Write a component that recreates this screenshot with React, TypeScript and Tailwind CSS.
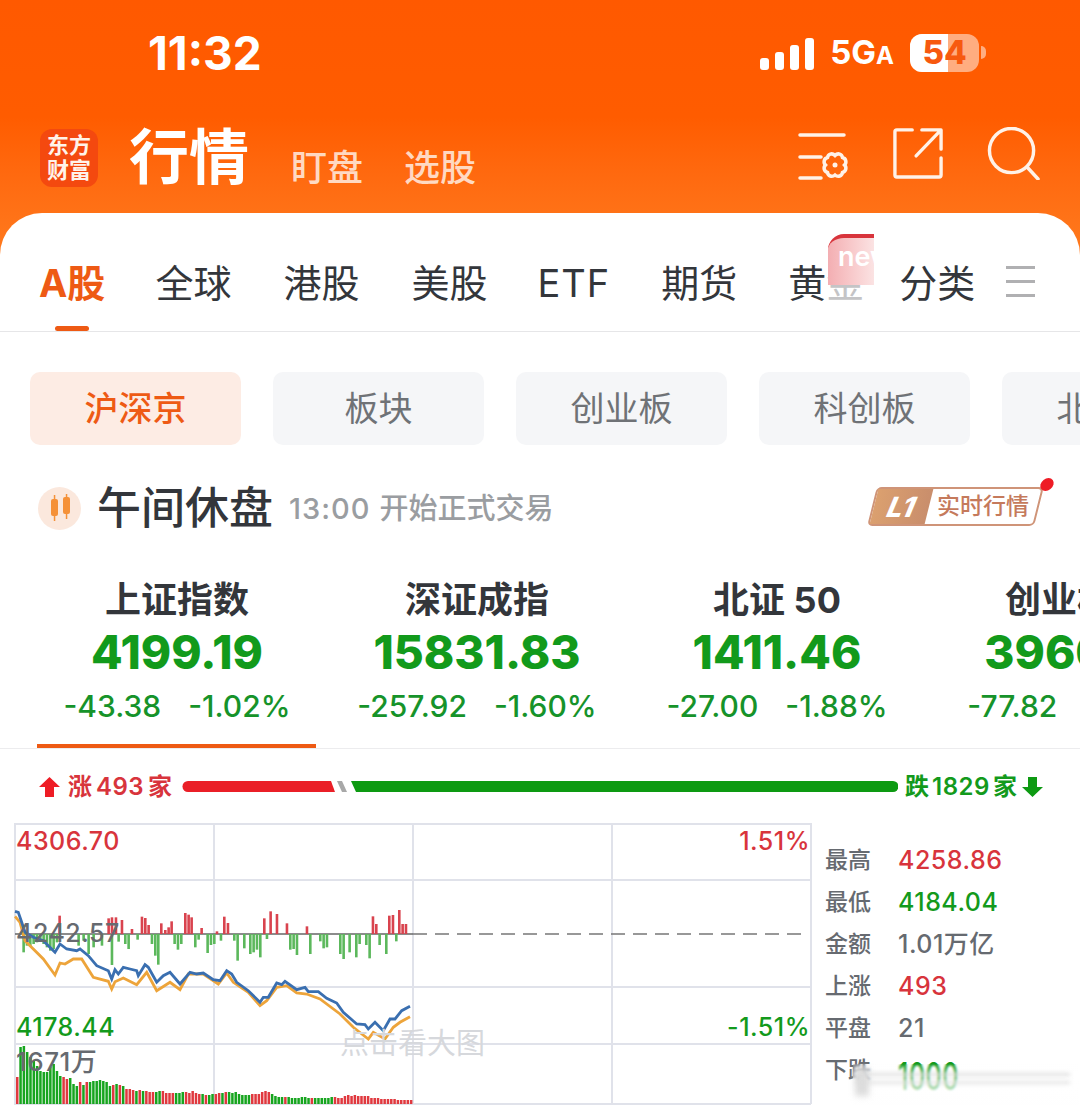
import React from "react";

const FONT = "font-['Inter','Noto_Sans_CJK_SC',sans-serif]";

const tabs = ["全球", "港股", "美股", "ETF", "期货"];
const pills = ["板块", "创业板", "科创板"];

const indices = [
  { name: "上证指数", price: "4199.19", diff: "-43.38", pct: "-1.02%" },
  { name: "深证成指", price: "15831.83", diff: "-257.92", pct: "-1.60%" },
  { name: "北证 50", price: "1411.46", diff: "-27.00", pct: "-1.88%" },
  { name: "创业板指", price: "3960.14", diff: "-77.82", pct: "-1.92%" },
];

const stats = [
  { label: "最高", value: "4258.86", color: "text-[#d8343c]" },
  { label: "最低", value: "4184.04", color: "text-[#139a1c]" },
  { label: "金额", value: "1.01万亿", color: "text-[#666a70]" },
  { label: "上涨", value: "493", color: "text-[#d8343c]" },
  { label: "平盘", value: "21", color: "text-[#666a70]" },
  { label: "下跌", value: "1000", color: "text-[#139a1c]" },
];

// coords below were read off a 3x crop, toPts brings them back to page px
const toPts = (p: number[][]) => p.map(([x, y]) => `${(x / 3).toFixed(1)},${(y / 3 + 820).toFixed(1)}`).join(" ");

const blueLine = [[45,277],[55,280],[65,310],[75,340],[100,355],[130,365],[165,400],[180,375],[200,390],[230,395],[240,390],[265,410],[290,440],[325,455],[335,480],[345,452],[355,465],[370,445],[390,450],[410,455],[415,470],[435,437],[445,445],[470,490],[490,470],[510,460],[540,495],[570,460],[590,465],[610,462],[640,482],[660,485],[680,455],[695,465],[710,490],[745,515],[780,550],[790,535],[805,535],[830,492],[845,497],[855,487],[890,512],[915,505],[925,518],[955,518],[980,538],[1010,552],[1030,580],[1070,615],[1095,617],[1105,630],[1125,610],[1150,635],[1170,600],[1185,600],[1205,575],[1230,562]];
const orangeLine = [[45,292],[60,310],[75,365],[100,390],[130,420],[165,468],[180,432],[195,435],[220,420],[245,420],[280,475],[325,487],[335,510],[345,488],[370,477],[410,497],[440,460],[470,515],[510,490],[540,512],[565,465],[610,465],[655,495],[680,462],[700,490],[745,520],[780,560],[800,545],[830,505],[860,500],[890,522],[920,525],[960,540],[1020,585],[1060,625],[1105,660],[1120,640],[1155,660],[1180,625],[1200,610],[1230,593]];
const redBars = [[178,290],[325,298],[335,295],[347,295],[365,303],[395,330],[425,293],[435,297],[445,318],[483,313],[495,333],[505,325],[514,307],[555,282],[565,287],[574,295],[604,327],[650,337],[672,293],[683,312],[792,298],[811,277],[830,285],[860,313],[920,322],[1118,292],[1128,315],[1167,290],[1178,288],[1197,273],[1207,315],[1217,315]];
const greenBars = [[70,400],[80,380],[90,382],[100,375],[110,370],[120,365],[130,375],[140,385],[150,395],[160,390],[170,370],[235,380],[250,365],[265,405],[280,385],[305,380],[335,438],[355,368],[375,375],[385,390],[412,362],[455,375],[465,410],[474,437],[523,375],[533,392],[543,375],[585,385],[595,362],[622,402],[632,378],[642,375],[662,365],[702,365],[712,425],[732,388],[750,405],[760,400],[770,392],[780,415],[800,360],[870,392],[880,390],[890,408],[930,405],[960,367],[970,388],[980,385],[1020,405],[1030,420],[1048,400],[1068,415],[1078,375],[1098,378],[1108,418],[1138,378],[1158,405],[1188,367]];
const volumes = [27,57,58,52,47,43,38,33,32,32,37,40,33,28,27,25,26,20,18,22,19,22,22,23,23,24,23,22,18,19,20,19,18,15,15,14,13,14,13,13,12,12,12,13,13,11,11,11,11,11,12,12,11,13,11,10,10,9,9,10,10,11,11,12,12,11,12,10,9,9,9,10,10,10,12,13,12,10,8,7,7,7,7,6,6,6,7,7,6,6,6,6,6,6,6,7,7,6,6,8,9,8,9,8,8,8,8,6,6,6,5,5,5,5,5,4,4,4,4,4];
const volColors = "rgggggggggggggrrgggrgrgggggggrgrgrrrgrgrrrggrrrrgggrrrrrgrggrrgrgggggggrrrrrrggggrgggggggrggggggrrrrrrrrrrrrrrrrrrrrrrrr";

const StatusBar = () => (
  <div className="flex h-[72px] items-center justify-between pl-[148px] pr-[94px] pt-[33px]">
    <span className="text-[46px] font-bold leading-none text-white">11:32</span>
    <div className="flex items-center">
      <svg width="54" height="34" viewBox="0 0 54 34" className="mr-[16px]">
        <rect x="0" y="22" width="9" height="12" rx="3" fill="#fff" />
        <rect x="15" y="16" width="9" height="18" rx="3" fill="#fff" />
        <rect x="30" y="9" width="9" height="25" rx="3" fill="#fff" />
        <rect x="45" y="2" width="9" height="32" rx="3" fill="#fff" />
      </svg>
      <span className="mr-[16px] flex items-baseline font-bold leading-none text-white">
        <span className="text-[33px]">5G</span>
        <span className="text-[24px]">A</span>
      </span>
      <div className="relative h-[38px] w-[69px] overflow-hidden rounded-[12px] bg-white/50">
        <div className="h-full w-[38px] bg-white" />
        <span className="absolute inset-0 flex items-center justify-center text-[33px] font-extrabold leading-none text-[#f7590f]">54</span>
      </div>
      <div className="ml-[2px] h-[13px] w-[5px] rounded-r-full bg-white/50" />
    </div>
  </div>
);

const TitleRow = () => (
  <div className="mt-[52px] flex items-start pl-[40px] pr-[40px]">
    <div className="mt-[5px] flex h-[58px] w-[58px] flex-col items-center justify-center rounded-[12px] bg-[#f4490f] text-[22px] font-bold leading-[25px] text-[#fff3ea]">
      <span>东方</span>
      <span>财富</span>
    </div>
    <span className="ml-[31px] text-[60px] font-bold leading-[66px] text-white">行情</span>
    <span className="ml-[42px] mt-[20px] text-[36px] font-medium leading-[48px] text-white/75">盯盘</span>
    <span className="ml-[41px] mt-[20px] text-[36px] font-medium leading-[48px] text-white/75">选股</span>
    <div className="ml-auto flex items-start">
      <svg width="52" height="52" viewBox="0 0 52 52" fill="none" stroke="#fff2e8" strokeWidth="3.5" strokeLinecap="round" className="mt-[5px]">
        <path d="M2 6h44M2 28h21M2 49h21" />
        <path d="M37 26.500c3-3 7-1.500 7.500 2 3.500 1 4.500 5 2 7.500 2.500 2.500 1.500 6.500-2 7.500-.5 3.500-4.500 5-7.500 2.500-3 2.500-7 1-7.500-2.500-3.500-1-4.500-5-2-7.500-2.500-2.500-1.500-6.500 2-7.500 .5-3.500 4.500-5 7.500-2z" />
        <circle cx="37" cy="36" r="2.500" fill="#fff2e8" stroke="none" />
      </svg>
      <svg width="50" height="52" viewBox="0 0 52 54" fill="none" stroke="#fff2e8" strokeWidth="3.5" strokeLinecap="round" strokeLinejoin="round" className="ml-[43px] mt-[3px]">
        <path d="M20 3H4a2 2 0 0 0-2 2v45a2 2 0 0 0 2 2h44a2 2 0 0 0 2-2V32" />
        <path d="M24 30L49 4M30 3h20v20" />
      </svg>
      <svg width="53" height="53" viewBox="0 0 54 54" fill="none" stroke="#fff2e8" strokeWidth="3.5" strokeLinecap="round" className="ml-[44px] mt-[3px]">
        <circle cx="25" cy="24" r="22.500" />
        <path d="M41 41l11 12" />
      </svg>
    </div>
  </div>
);

const TabBar = () => (
  <div className="relative flex h-[119px] items-start border-b border-[#e6e6e8] pl-[39px] pt-[45px] text-[38px] leading-[50px] text-[#33363b]">
    <div className="relative mr-[50px] flex h-[73px] flex-col items-center">
      <span className="font-bold text-[#ee5a14]">A股</span>
      <div className="absolute bottom-0 h-[5px] w-[34px] rounded-full bg-[#ee5a14]" />
    </div>
    <div className="flex gap-[52px]">
      {tabs.map((t) => (
        <span key={t} className={t === "ETF" ? "-ml-[2px] -mr-[1px] tracking-[1px]" : ""}>
          {t}
        </span>
      ))}
      <span className="-ml-[1px]">
        黄<span className="text-[#c4c4c6]">金</span>
      </span>
    </div>
    <span className="ml-[35px]">分类</span>
    <div className="ml-[31px] mt-[8px] flex h-[31px] w-[29px] flex-col justify-between">
      <div className="h-[3px] bg-[#b0b0b2]" />
      <div className="h-[3px] bg-[#b0b0b2]" />
      <div className="h-[3px] bg-[#b0b0b2]" />
    </div>
    <div className="absolute left-[828px] top-[21px] h-[51px] w-[46px] overflow-hidden rounded-tl-[16px] border-t-[4px] border-[#d8343c] bg-gradient-to-r from-[#f3aeb2] to-[#fbe3e3]">
      <span className="absolute left-[10px] top-[2px] text-[27px] font-semibold leading-[34px] text-white">new</span>
    </div>
  </div>
);

const Pills = () => (
  <div className="mt-[40px] flex gap-[32px] overflow-hidden pl-[30px] text-[34px] leading-none text-[#6f7276]">
    <div className="flex h-[73px] w-[211px] shrink-0 items-center justify-center rounded-[10px] bg-[#fdece4] font-medium text-[#ee5a14]">沪深京</div>
    {pills.map((p) => (
      <div key={p} className="flex h-[73px] w-[211px] shrink-0 items-center justify-center rounded-[10px] bg-[#f5f6f8]">
        {p}
      </div>
    ))}
    <div className="flex h-[73px] w-[211px] shrink-0 items-center justify-center rounded-[10px] bg-[#f5f6f8]">北交所</div>
  </div>
);

const StatusRow = () => (
  <div className="mt-[34px] flex h-[58px] items-center pl-[38px] pr-[41px]">
    <div className="flex h-[43px] w-[43px] items-center justify-center rounded-full bg-[#fbe8dd]">
      <svg width="24" height="28" viewBox="0 0 24 28" fill="#f59138">
        <rect x="3" y="5" width="7" height="17" rx="2" />
        <rect x="5.800" y="1" width="1.500" height="26" />
        <rect x="15" y="3" width="7" height="17" rx="2" />
        <rect x="17.800" y="0" width="1.500" height="25" />
      </svg>
    </div>
    <span className="ml-[16px] text-[44px] font-medium leading-none text-[#33363b]">午间休盘</span>
    <span className="ml-[16px] text-[29px] font-medium leading-none tracking-[1px] text-[#9a9da1]">13:00</span>
    <span className="ml-[9px] text-[29px] font-medium leading-none text-[#9a9da1]">开始正式交易</span>
    <div className="relative ml-auto mt-[-3px] flex h-[39px] w-[167px] -skew-x-[14deg] overflow-visible rounded-[5px] border-2 border-[#cf9478]">
      <div className="flex w-[55px] items-center justify-center bg-gradient-to-r from-[#dba06f] to-[#c98e6c]">
        <span className="text-[28px] font-extrabold italic leading-none text-white">L1</span>
      </div>
      <div className="flex flex-1 skew-x-[14deg] items-center justify-center text-[23px] font-medium leading-none text-[#c57a5c]">实时行情</div>
      <div className="absolute -right-[11px] -top-[11px] h-[13px] w-[13px] rounded-full bg-[#ee1c25]" />
    </div>
  </div>
);

const IndexRow = () => (
  <div className="relative mt-[40px] flex h-[172px] overflow-hidden border-b border-[#ececee] pl-[27px]">
    {indices.map((item, i) => (
      <div key={item.name} className="relative flex w-[300px] shrink-0 flex-col items-center">
        <span className="text-[36px] font-bold leading-[46px] text-[#33363b]">{item.name}</span>
        <span className="mt-[3px] text-[46px] font-extrabold leading-[52px] text-[#129a1b]">{item.price}</span>
        <div className="mt-[10px] flex gap-[27px] whitespace-nowrap text-[30px] font-medium leading-[36px] text-[#16932a]">
          <span>{item.diff}</span>
          <span>{item.pct}</span>
        </div>
        {i === 0 && <div className="absolute bottom-0 left-[10px] h-[4px] w-[279px] bg-[#ee5a14]" />}
      </div>
    ))}
  </div>
);

const ArrowIcon = ({ color, down }: { color: string; down?: boolean }) => (
  <svg width="21" height="20" viewBox="0 0 21 20" fill={color} className={down ? "rotate-180" : ""}>
    <path d="M10.500 0L21 10h-6v10H6V10H0z" />
  </svg>
);

const Breadth = () => (
  <div className="mt-[28px] flex h-[20px] items-center pl-[39px] text-[24px] font-semibold leading-none">
    <ArrowIcon color="#ee1c25" />
    <div className="ml-[8px] flex w-[104px] justify-between whitespace-nowrap text-[#d8343c]">
      <span>涨</span>
      <span className="tracking-[0.5px]">493</span>
      <span>家</span>
    </div>
    <svg width="716" height="12" viewBox="0 0 716 12" className="ml-[10px]">
      <path d="M6 0H149l4 11H6a5.500 5.500 0 0 1 0-11z" fill="#ea1f27" />
      <path d="M155 0h5l5 11h-5z" fill="#a8a8a8" />
      <path d="M169 0H711a5.500 5.500 0 0 1 0 11H174z" fill="#0d9a12" />
    </svg>
    <div className="ml-[7px] flex w-[112px] justify-between whitespace-nowrap text-[#139a1c]">
      <span>跌</span>
      <span className="tracking-[0.5px]">1829</span>
      <span>家</span>
    </div>
    <div className="ml-[5px]">
      <ArrowIcon color="#0d9a12" down />
    </div>
  </div>
);

const Chart = () => (
  <div className="relative h-[282px] w-[798px] text-[25px] font-medium leading-[28px] tracking-[0.5px]">
    <svg width="798" height="282" viewBox="14 824 798 282" className="block">
      <g stroke="#e0e2ea" strokeWidth="2" fill="none">
        <path d="M14 825H811M14 881H811M14 988H811M14 1045H811M14 1105H811" />
        <path d="M15 824V1105M214 824V1105M413 824V1105M612 824V1105M811 824V1105" />
      </g>
      <path d="M15 935H413" stroke="#666" strokeWidth="1.500" />
      <path d="M413 935H805" stroke="#777" strokeWidth="1.500" strokeDasharray="14 8" />
      {redBars.map(([x, y]) => (
        <rect key={x} x={x / 3 - 1} y={y / 3 + 820} width="2.600" height={935 - (y / 3 + 820)} fill="#d9434e" />
      ))}
      {greenBars.map(([x, y]) => (
        <rect key={x} x={x / 3 - 1} y="935" width="2.600" height={y / 3 + 820 - 935} fill="#5cb85c" />
      ))}
      <polyline points={toPts(orangeLine)} fill="none" stroke="#eda43a" strokeWidth="2.800" />
      <polyline points={toPts(blueLine)} fill="none" stroke="#3a6fb0" strokeWidth="2.800" />
      {volumes.map((h, i) => (
        <rect key={i} x={16 + i * 3.310} y={1105 - h} width="2.500" height={h} fill={volColors[i] === "r" ? "#e0393f" : "#17a51f"} />
      ))}
    </svg>
    <span className="absolute left-[2px] top-[4px] text-[#d8343c]">4306.70</span>
    <span className="absolute left-[2px] top-[96px] text-[#666a70]">4242.57</span>
    <span className="absolute left-[2px] top-[190px] text-[#139a1c]">4178.44</span>
    <span className="absolute left-[2px] top-[225px] text-[26px] text-[#666a70]">1671万</span>
    <span className="absolute right-[2px] top-[4px] text-[#d8343c]">1.51%</span>
    <span className="absolute right-[2px] top-[190px] text-[#139a1c]">-1.51%</span>
    <span className="absolute left-[326px] top-[204px] text-[29px] font-normal leading-[34px] tracking-normal text-[#d6d8dc]">点击看大图</span>
  </div>
);

const StatsPanel = () => (
  <div className="relative ml-[13px] flex flex-col pt-[16px]">
    {stats.map((s) => (
      <div key={s.label} className="flex h-[42px] items-center">
        <span className="w-[73px] text-[23px] font-medium leading-none text-[#666a70]">{s.label}</span>
        <span className={`origin-top text-[25px] font-medium leading-none tracking-[0.5px] ${s.color} ${s.label === "下跌" ? "scale-y-150" : ""}`}>{s.value}</span>
      </div>
    ))}
    {/* blurred watermark sitting on the last row */}
    <div className="absolute left-[28px] top-[241px] h-[41px] w-[226px] bg-gradient-to-b from-white/0 via-white/60 to-white backdrop-blur-[1px]" />
    <div className="absolute left-[30px] top-[250px] h-[3px] w-[215px] bg-[#dcdcdc] blur-[2px]" />
    <div className="absolute left-[30px] top-[258px] h-[3px] w-[215px] bg-[#e2e2e2] blur-[2px]" />
    <div className="absolute left-[30px] top-[245px] h-[28px] w-[14px] bg-[#dcdcdc] blur-[3px]" />
  </div>
);

export default function App() {
  return (
    <div className={`${FONT} h-[1109px] w-[1080px] overflow-hidden`}>
      <div className="h-[260px] bg-gradient-to-b from-[#ff5900] via-[#ff5c00] via-45% to-[#ff7b1e]">
        <StatusBar />
        <TitleRow />
      </div>
      <div className="mt-[-47px] h-[896px] overflow-hidden rounded-t-[42px] bg-white">
        <TabBar />
        <Pills />
        <StatusRow />
        <IndexRow />
        <Breadth />
        <div className="mt-[26px] flex pl-[14px]">
          <Chart />
          <StatsPanel />
        </div>
      </div>
    </div>
  );
}
